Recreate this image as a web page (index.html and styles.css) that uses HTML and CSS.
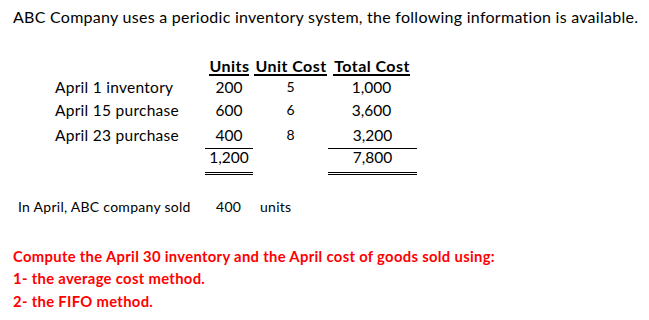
FILE: index.html
```html
<!DOCTYPE html>
<html>
<head>
<meta charset="utf-8">
<link rel="stylesheet" href="styles.css">
</head>
<body>
<div class="page">
  <p class="title">ABC Company uses a periodic inventory system, the following information is available.</p>
  <div class="inv">
    <div class="c lab h"></div>
    <div class="c num h"><span class="hd">Units</span></div>
    <div class="c num h"><span class="hd">Unit Cost</span></div>
    <div class="c num h"><span class="hd">Total Cost</span></div>

    <div class="c lab r1">April 1 inventory</div>
    <div class="c num r1">200</div>
    <div class="c num r1 sm">5</div>
    <div class="c num r1">1,000</div>

    <div class="c lab r2">April 15 purchase</div>
    <div class="c num r2">600</div>
    <div class="c num r2 sm">6</div>
    <div class="c num r2">3,600</div>

    <div class="c lab r3">April 23 purchase</div>
    <div class="c num r3 line">400</div>
    <div class="c num r3 sm">8</div>
    <div class="c num r3 line wide">3,200</div>

    <div class="c lab t"></div>
    <div class="c num t dbl">1,200</div>
    <div class="c num t"></div>
    <div class="c num t dbl wide">7,800</div>
  </div>
  <div class="sold"><span class="sold-lab">In April, ABC company sold</span><span class="sold-qty">400</span><span>units</span></div>
  <div class="task">
    <div>Compute the April 30 inventory and the April cost of goods sold using:</div>
    <div>1- the average cost method.</div>
    <div>2- the FIFO method.</div>
  </div>
</div>
</body>
</html>
```
FILE: styles.css
```css
html, body {
  margin: 0;
  padding: 0;
  background: #ffffff;
}
.page {
  font-family: Lato, "Liberation Sans", sans-serif;
  color: #000000;
  width: 649px;
  height: 320px;
  overflow: hidden;
}
.title {
  margin: 7px 0 0 13px;
  font-size: 16px;
  letter-spacing: 0.27px;
  line-height: 20px;
  white-space: nowrap;
}
.inv {
  display: grid;
  grid-template-columns: 150px 48px 75px 87px;
  margin: 29px 0 0 55px;
  font-size: 15.5px;
}
.c {
  white-space: nowrap;
}
.lab {
  letter-spacing: 0.27px;
}
.num {
  text-align: center;
}
.h { line-height: 20px; }
.hd {
  display: inline-block;
  font-weight: 700;
  font-size: 16px;
  letter-spacing: 0.45px;
  line-height: 17px;
  border-bottom: 2px solid #000;
  padding: 0 0 0 1px;
}
.r1 { line-height: 22px; }
.r2 { line-height: 24px; }
.r3 { line-height: 26px; }
.t { line-height: 16px; padding-bottom: 7px; }
.sm { font-size: 14px; }
.line { border-bottom: 1px solid #000; }
.dbl { border-bottom: 3px double #000; }
.wide { margin-right: -2px; }
.sold {
  display: flex;
  margin: 22px 0 0 18px;
  font-size: 14px;
  letter-spacing: 0.27px;
  line-height: 20px;
}
.sold-lab { width: 198px; }
.sold-qty { width: 44px; }
.task {
  margin: 28px 0 0 13px;
  color: #ff0000;
  font-weight: 700;
  font-size: 14.8px;
  letter-spacing: 0.32px;
  line-height: 22.4px;
}
```
